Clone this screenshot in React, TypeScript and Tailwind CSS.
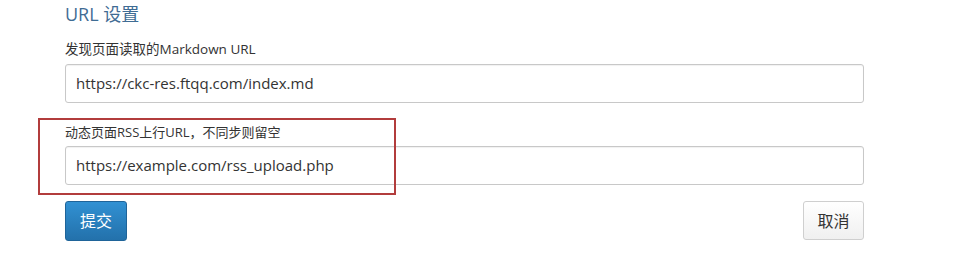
import React from "react";

export default function App() {
  const font = { fontFamily: '"Open Sans", "Noto Sans CJK SC", sans-serif' };
  return (
    <div className="relative w-[963px] h-[269px] bg-white overflow-hidden" style={font}>
      <div className="absolute left-[38px] top-[118px] w-[358px] h-[77px] border-2 border-[#b23c3c] pointer-events-none" />
      <div className="pl-[65px] pr-[99px] pt-[2px]">
        <h3 className="text-[18px] leading-[24px] text-[#3f6c94] font-normal">URL 设置</h3>
        <div className="mt-[14px] text-[13.5px] leading-[18px] text-[#333]">发现页面读取的Markdown URL</div>
        <div className="mt-[6px] h-[39px] border border-[#c8c8c8] rounded-[3px] px-[10px] flex items-center text-[15px] text-[#333] shadow-[inset_0_1px_1px_rgba(0,0,0,0.06)]">
          https://ckc-res.ftqq.com/index.md
        </div>
        <div className="mt-[20px] text-[13px] leading-[18px] text-[#333]">动态页面RSS上行URL，不同步则留空</div>
        <div className="mt-[5px] h-[39px] border border-[#c8c8c8] rounded-[3px] px-[10px] flex items-center text-[15px] text-[#333] shadow-[inset_0_1px_1px_rgba(0,0,0,0.06)]">
          https://example.com/rss_upload.php
        </div>
        <div className="mt-[16px] flex justify-between">
          <button className="w-[62px] h-[40px] rounded-[3px] border border-[#1f6499] bg-gradient-to-b from-[#3191d3] to-[#2371ab] text-white text-[16px]">
            提交
          </button>
          <button className="w-[61px] h-[39px] rounded-[3px] border border-[#cfcfcf] bg-gradient-to-b from-white to-[#f0f0f0] text-[#333] text-[16px]">
            取消
          </button>
        </div>
      </div>
    </div>
  );
}
